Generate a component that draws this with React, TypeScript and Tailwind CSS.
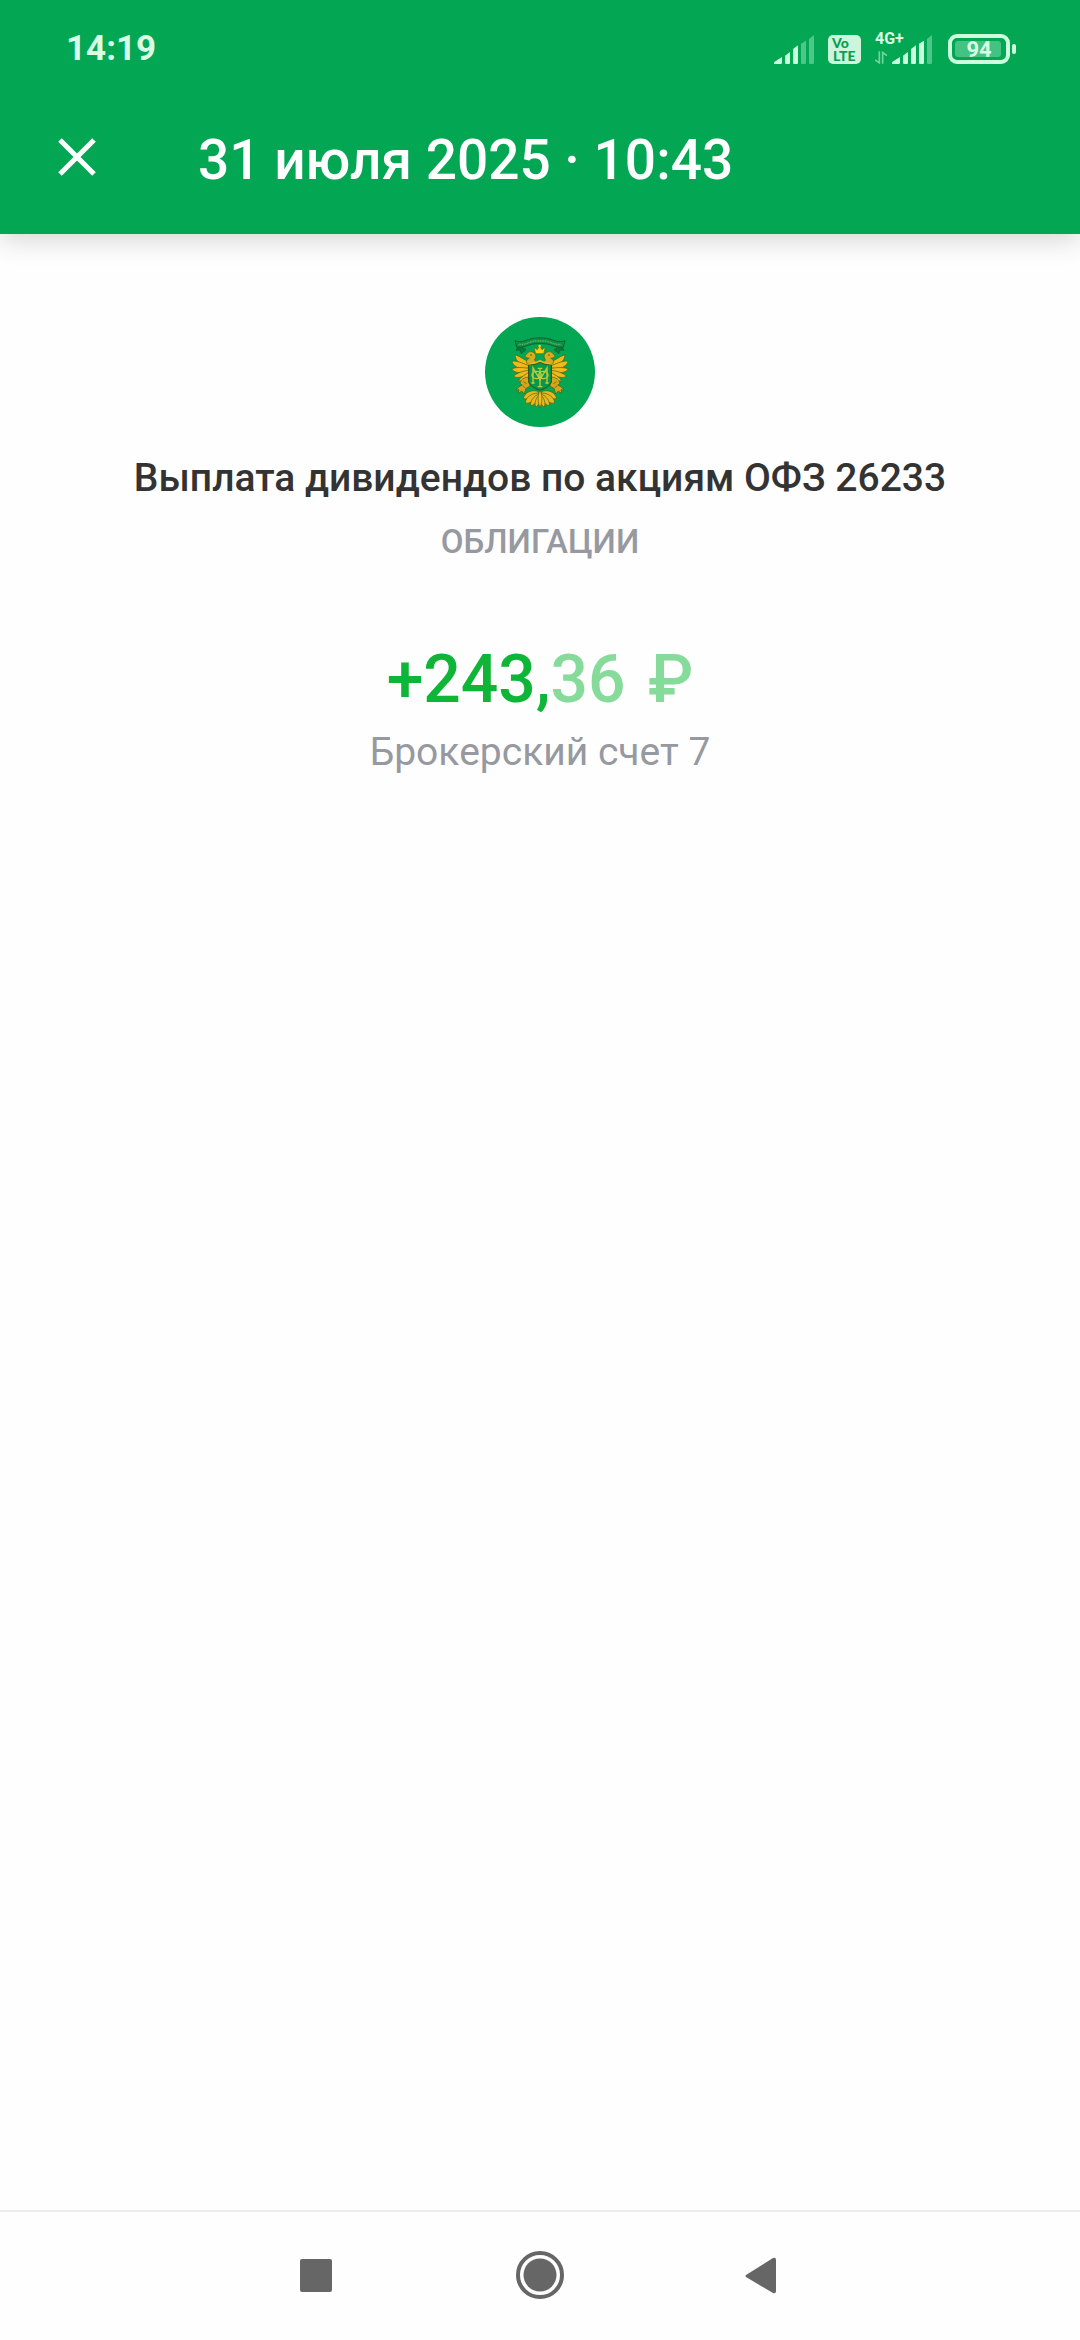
const feathers = [
  "M182 190 C162 176 148 168 136 163 C134 176 144 188 172 202 Z",
  "M176 196 C154 186 140 182 126 182 C128 196 144 206 172 208 Z",
  "M176 204 C154 200 140 201 125 205 C132 218 150 219 176 214 Z",
  "M178 210 C160 211 144 217 130 227 C142 237 162 228 180 220 Z",
  "M180 214 C166 222 152 231 145 241 C160 246 174 236 184 224 Z",
];

const tail = [
  "M206 274 C186 266 164 276 160 294 C172 300 190 290 206 280 Z",
  "M206 278 C184 278 166 292 166 308 C180 312 196 298 208 284 Z",
  "M208 280 C190 288 180 302 182 316 C196 314 206 300 210 286 Z",
  "M210 282 C198 292 192 306 197 320 C206 316 210 304 211 290 Z",
];

function EagleHalf() {
  return (
    <g stroke="#4b6211" strokeWidth="2" strokeLinejoin="round">
      <path
        d="M182 190 L160 192 L152 208 L162 226 L166 236 L180 244 L186 200 Z"
        fill="#d9a41b"
      />
      {feathers.map((d) => (
        <path key={d} d={d} fill="#f2b91c" />
      ))}
      <path
        d="M174 192 C165 184 171 177 178 174 C173 174 168 172 165 168 C171 158 179 151 188 155 C199 160 200 171 193 179 L204 190 Z"
        fill="#d9ac20"
      />
      <circle cx="183" cy="164" r="2" fill="#174f18" stroke="none" />
      <path
        d="M174 230 C162 232 150 238 151 250 L157 254 L146 260 L138 269 L147 268 L145 279 L155 272 L163 281 L167 265 L179 258 C182 246 181 238 174 230 Z"
        fill="#dba41e"
      />
      <path d="M160 244 L170 250 M158 256 L166 262" fill="none" />
      {tail.map((d) => (
        <path key={d} d={d} fill="#e9b820" />
      ))}
    </g>
  );
}

function Emblem() {
  return (
    <svg
      viewBox="45 50 330 330"
      className="size-[110px]"
      role="img"
      aria-label="ОФЗ 26233"
    >
      <circle cx="210" cy="215" r="165" fill="#03a653" />
      <path
        d="M146 134 L138 150 L150 149 L154 160 L168 148 Z M274 134 L282 150 L270 149 L266 160 L252 148 Z"
        fill="#0b7a3c"
        stroke="#075c2b"
        strokeWidth="2"
      />
      <EagleHalf />
      <g transform="translate(420 0) scale(-1 1)">
        <EagleHalf />
      </g>
      <path
        d="M135 121 C156 130 172 116 190 114 C204 112 216 112 230 114 C248 116 264 130 285 121 L280 140 C262 145 246 133 230 131 C216 129 204 129 190 131 C174 133 158 145 140 140 Z"
        fill="#0c8f48"
        stroke="#075c2b"
        strokeWidth="2.5"
      />
      <path
        d="M146 132 C164 135 178 124 196 122 H224 C242 124 256 135 274 132"
        fill="none"
        stroke="#6fb85a"
        strokeWidth="4"
        strokeDasharray="3 2"
      />
      <path
        d="M197 160 L192 141 L202 148 L209 136 L216 148 L226 141 L221 160 Z"
        fill="#ffca10"
        stroke="#5d6d10"
        strokeWidth="2"
      />
      <circle cx="209" cy="137" r="4" fill="#ffca10" />
      <path
        d="M176 190 Q197 196 210 184 Q223 196 244 190 V246 Q238 260 210 270 Q182 260 176 246 Z"
        fill="#07984a"
        stroke="#274f10"
        strokeWidth="3"
      />
      <path
        d="M174 191 Q196 190 210 181 Q224 190 246 191"
        fill="none"
        stroke="#f0b81b"
        strokeWidth="5"
      />
      <g fill="none" stroke="#c0cc3b" strokeWidth="4">
        <path d="M184 248 H194 M189 247 V203 L210 238 L231 203 V247 M226 248 H236" />
        <ellipse cx="200" cy="224" rx="14" ry="11" />
        <ellipse cx="220" cy="224" rx="14" ry="11" />
        <path d="M210 204 V260 M203 204 H217 M203 259 H217" />
      </g>
      <path
        d="M210 270 C202 284 203 306 210 323 C217 306 218 284 210 270 Z"
        fill="#f2bd1d"
        stroke="#4b6211"
        strokeWidth="2"
      />
    </svg>
  );
}

function Signal({ bars }: { bars: number }) {
  const shapes = [
    "M1 87 Q-2 82 4 79 L24 66 V83 Q24 87 20 87 Z",
    "M33 62 L48 51 V83 Q48 87 44 87 H37 Q33 87 33 83 Z",
    "M57 42 L72 31 V83 Q72 87 68 87 H61 Q57 87 57 83 Z",
    "M81 26 L96 17 V83 Q96 87 92 87 H85 Q81 87 81 83 Z",
    "M105 12 L120 0 V83 Q120 87 116 87 H109 Q105 87 105 83 Z",
  ];

  return (
    <svg viewBox="0 0 120 87" className="h-[29px] w-10" aria-hidden="true">
      {shapes.map((d, index) => (
        <path key={d} d={d} fill={index < bars ? "#ccffdd" : "#4dc788"} />
      ))}
    </svg>
  );
}

function StatusBar() {
  return (
    <div className="flex h-[98px] items-center justify-between pl-[66px] pr-16 text-[#d8ffe4]">
      <p className="text-[35px] leading-10 font-bold">14:19</p>

      <div className="flex items-center">
        <Signal bars={3} />

        <svg viewBox="0 0 33 29" className="ml-3.5 h-[29px] w-[33px]">
          <rect width="33" height="29" rx="5" fill="#ccf5dc" />
          <g fill="#07a052" fontFamily="Lato, sans-serif" fontWeight="900">
            <text x="4" y="13" fontSize="14">
              Vo
            </text>
            <text x="5" y="26" fontSize="14">
              LTE
            </text>
          </g>
        </svg>

        <div className="relative ml-[31px]">
          <Signal bars={4} />
          <span className="absolute -top-1 -left-[17px] text-base leading-4 font-bold">
            4G+
          </span>
          <svg
            viewBox="0 0 36 38"
            className="absolute bottom-0 -left-[17px] h-[13px] w-3"
            aria-hidden="true"
          >
            <path
              d="M13 0 V35 L0 26 M23 38 V4 L36 13"
              fill="none"
              stroke="#70d59e"
              strokeWidth="5"
            />
          </svg>
        </div>

        <svg viewBox="0 0 68 30" className="ml-4 h-[30px] w-[68px]">
          <rect
            x="2"
            y="2"
            width="58"
            height="26"
            rx="7"
            fill="none"
            stroke="#ccffdd"
            strokeWidth="4"
          />
          <rect x="7" y="7" width="46" height="16" rx="3" fill="#43c282" />
          <rect x="64" y="10" width="4" height="10" rx="2" fill="#ccffdd" />
          <text
            x="31"
            y="23"
            fontSize="22"
            fontWeight="700"
            textAnchor="middle"
            fill="#d8ffe4"
          >
            94
          </text>
        </svg>
      </div>
    </div>
  );
}

function Header() {
  return (
    <header className="bg-[#03a653] shadow-[0_8px_24px_rgba(0,0,0,0.14)]">
      <StatusBar />
      <div className="flex h-[136px] items-start pl-[58px]">
        <button type="button" aria-label="Закрыть" className="mt-10">
          <svg viewBox="0 0 38 38" className="size-[38px]">
            <path
              d="M2 2 L36 36 M36 2 L2 36"
              fill="none"
              stroke="#fff"
              strokeWidth="5"
            />
          </svg>
        </button>
        <h1 className="mt-[30px] ml-[102px] text-[55px] leading-16 font-medium text-white">
          31 июля 2025 · 10:43
        </h1>
      </div>
    </header>
  );
}

function NavBar() {
  return (
    <nav className="flex h-[130px] items-center justify-center gap-[180px] border-t-2 border-[#ececec] text-[#666]">
      <button type="button" aria-label="Недавние">
        <svg viewBox="0 0 38 38" className="size-[38px]" fill="currentColor">
          <rect x="3" y="2" width="32" height="33" rx="2" />
        </svg>
      </button>
      <button type="button" aria-label="Домой">
        <svg viewBox="0 0 50 50" className="size-[50px]">
          <circle
            cx="25"
            cy="24"
            r="22"
            fill="none"
            stroke="currentColor"
            strokeWidth="4"
          />
          <circle cx="25" cy="24" r="16.5" fill="currentColor" />
        </svg>
      </button>
      <button type="button" aria-label="Назад">
        <svg viewBox="0 0 38 38" className="size-[38px]" fill="currentColor">
          <path d="M1 18 L28 1 Q31 0 31 3 V34 Q31 37 28 36 L1 20 Q0 19 1 18 Z" />
        </svg>
      </button>
    </nav>
  );
}

export default function App() {
  return (
    <div className="flex min-h-screen flex-col bg-[#fefefe] font-[Roboto,sans-serif]">
      <Header />

      <main className="flex flex-1 flex-col items-center pt-[83px] text-center">
        <Emblem />
        <h2 className="mt-[27px] text-[39px] leading-12 font-medium text-[#333]">
          Выплата дивидендов по акциям ОФЗ 26233
        </h2>
        <p className="mt-5 text-[33px] leading-10 font-medium text-[#9699a0]">
          ОБЛИГАЦИИ
        </p>
        <p className="mt-[78px] text-[66px] leading-20 font-medium text-[#0eb537]">
          +243,
          <span className="text-[#86db9b]">
            36 <span className="ml-1.5">₽</span>
          </span>
        </p>
        <p className="mt-2 text-[39px] leading-12 text-[#9699a0]">
          Брокерский счет 7
        </p>
      </main>

      <NavBar />
    </div>
  );
}
